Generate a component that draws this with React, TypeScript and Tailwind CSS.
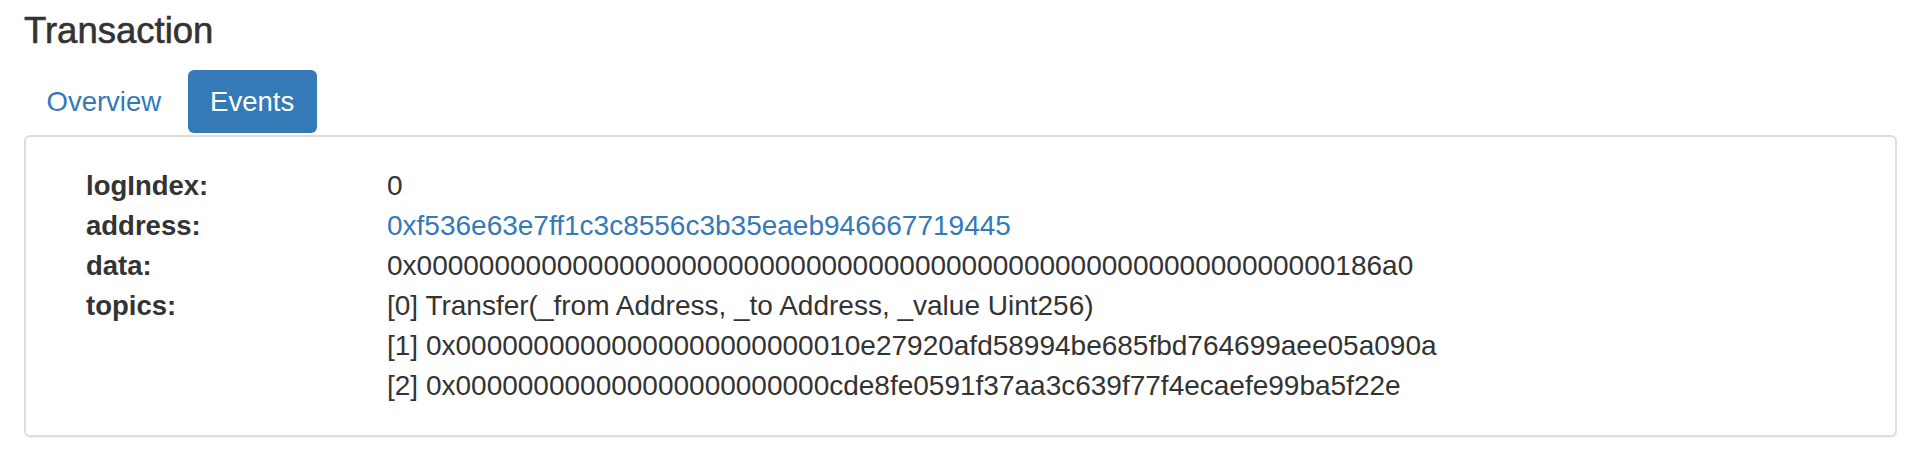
import React from "react";

const rows: { label: string; values: string[]; link?: boolean }[] = [
  { label: "logIndex", values: ["0"] },
  { label: "address", values: ["0xf536e63e7ff1c3c8556c3b35eaeb946667719445"], link: true },
  { label: "data", values: ["0x" + "0".repeat(59) + "186a0"] },
  {
    label: "topics",
    values: [
      "[0] Transfer(_from Address, _to Address, _value Uint256)",
      "[1] 0x" + "0".repeat(24) + "10e27920afd58994be685fbd764699aee05a090a",
      "[2] 0x" + "0".repeat(24) + "cde8fe0591f37aa3c639f77f4ecaefe99ba5f22e",
    ],
  },
];

export default function App() {
  return (
    <div className="w-[1928px] h-[464px] bg-white pl-[24px] pr-[31px] text-[#333] font-['Liberation_Sans',Arial,sans-serif]">
      <h1 className="pt-[11px] text-[36.5px] leading-[40px] font-medium [-webkit-text-stroke:0.6px_#333]">Transaction</h1>
      <div className="mt-[19px] flex gap-[4px]">
        <div className="h-[63px] leading-[63px] px-[22.5px] rounded-[6px] text-[27.5px] text-[#337ab7]">Overview</div>
        <div className="h-[63px] leading-[63px] px-[22.5px] rounded-[6px] text-[27.5px] text-white bg-[#337ab7]">Events</div>
      </div>
      <div className="mt-[2px] border-2 border-[#dddddd] rounded-[6px] shadow-[0_1px_1px_rgba(0,0,0,0.05)] pt-[29px] pb-[29px] pl-[60px] text-[28px] leading-[40px]">
        {rows.map((r) => (
          <div key={r.label} className="flex">
            <div className="w-[301px] font-bold text-[27.5px]">{r.label}:</div>
            <div className="flex flex-col">
              {r.values.map((v) => (
                <div key={v} className={r.link ? "text-[#337ab7]" : ""}>{v}</div>
              ))}
            </div>
          </div>
        ))}
      </div>
    </div>
  );
}
